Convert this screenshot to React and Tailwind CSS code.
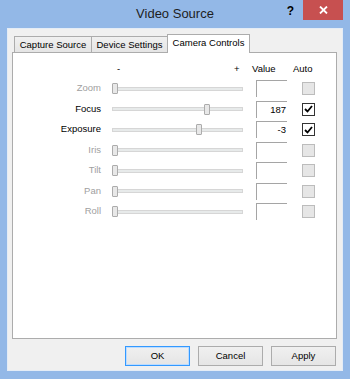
import React from "react";

const rows = [
  { label: "Zoom", enabled: false, h: "h-[21px]" },
  { label: "Focus", enabled: true, h: "h-[20px]", thumb: 92, value: "187" },
  { label: "Exposure", enabled: true, h: "h-[21px]", thumb: 84, value: "-3" },
  { label: "Iris", enabled: false, h: "h-[20px]" },
  { label: "Tilt", enabled: false, h: "h-[21px]" },
  { label: "Pan", enabled: false, h: "h-[20px]" },
  { label: "Roll", enabled: false, h: "h-[21px]" },
];

export default function App() {
  return (
    <div className="flex h-[379px] w-[350px] flex-col bg-[#93b8e7] font-['Liberation_Sans',Arial,sans-serif] text-[9.5px] text-black">
      <div className="grid h-[28px] grid-cols-[1fr_auto_1fr]">
        <div />
        <div className="pt-[5px] text-[13px] leading-[18px] text-[#1e1e1e]">Video Source</div>
        <div className="flex items-start justify-end">
          <span className="mr-[9px] mt-[4px] text-[12px] font-bold leading-[14px]">?</span>
          <button className="mr-[7px] flex h-[20px] w-[40px] items-center justify-center bg-[#c75050]">
            <svg width="9" height="8" viewBox="0 0 9 8">
              <path d="M1 0.5 L8 7.5 M8 0.5 L1 7.5" stroke="white" strokeWidth="1.8" />
            </svg>
          </button>
        </div>
      </div>

      <div className="mx-[7px] flex h-[343px] flex-col border border-[#e4ecf6] bg-[#f0f0f0] pl-[4px] pr-[5px]">
        <div className="mt-[4px] flex h-[19px] items-end pl-[2px]">
          <Tab label="Capture Source" w="w-[78px]" />
          <Tab label="Device Settings" w="w-[77px]" className="-ml-px" />
          <div className="relative z-10 -mb-px -ml-px flex h-[19px] w-[83px] items-start justify-center border border-b-0 border-[#acacac] bg-white pt-[1px] leading-[14px]">
            Camera Controls
          </div>
        </div>

        <div className="h-[287px] border border-[#acacac] bg-white pt-[6px]">
          <div className="flex h-[19px] items-center pl-[104px] leading-none">
            <span className="w-[117px]">-</span>
            <span className="w-[18px]">+</span>
            <span className="w-[41px]">Value</span>
            <span>Auto</span>
          </div>
          {rows.map((r) => (
            <Row key={r.label} {...r} />
          ))}
        </div>

        <div className="mt-[7px] flex justify-end gap-[8px] pr-[1px]">
          <Button label="OK" primary />
          <Button label="Cancel" />
          <Button label="Apply" />
        </div>
      </div>
    </div>
  );
}

function Tab({ label, w, className = "" }) {
  return (
    <div className={`flex h-[16px] ${w} items-start justify-center border border-b-0 border-[#acacac] bg-gradient-to-b from-[#f0f0f0] to-[#e5e5e5] pt-[1px] leading-[14px] ${className}`}>
      {label}
    </div>
  );
}

function Row({ label, enabled, h, thumb = 0, value = "" }) {
  return (
    <div className={`flex ${h} items-center`}>
      <div className={`w-[88px] text-right ${enabled ? "text-black" : "text-[#a0a0a0]"}`}>{label}</div>
      <div className="relative ml-[11px] flex h-[11px] w-[131px] items-center">
        <div className="h-[4px] w-full border border-[#d6d6d6] bg-[#e7eaea]" />
        <div className="absolute top-0 h-[11px] w-[6px] rounded-[1px] border border-[#acacac] bg-[#e8e8e8]" style={{ left: thumb }} />
      </div>
      <div className="ml-[13px] flex h-[17px] w-[31px] items-center justify-end border-l border-t border-[#a5a5a5] border-b-[#eaeaea] border-r-[#e3e3e3] bg-white pr-[1px] leading-none">
        {value}
      </div>
      <div className={`ml-[15px] flex h-[13px] w-[13px] items-center justify-center border ${enabled ? "border-[#333333] bg-white" : "border-[#bcbcbc] bg-[#e6e6e6]"}`}>
        {enabled && (
          <svg width="9" height="8" viewBox="0 0 9 8">
            <path d="M1 4 L3.5 6.5 L8 1" fill="none" stroke="black" strokeWidth="1.8" />
          </svg>
        )}
      </div>
    </div>
  );
}

function Button({ label, primary }) {
  return (
    <button
      className={`h-[20px] w-[65px] border bg-gradient-to-b from-[#f0f0f0] to-[#e5e5e5] leading-none ${
        primary ? "border-[#3399ff] shadow-[inset_0_0_0_1px_#bcdcff]" : "border-[#acacac]"
      }`}
    >
      {label}
    </button>
  );
}
